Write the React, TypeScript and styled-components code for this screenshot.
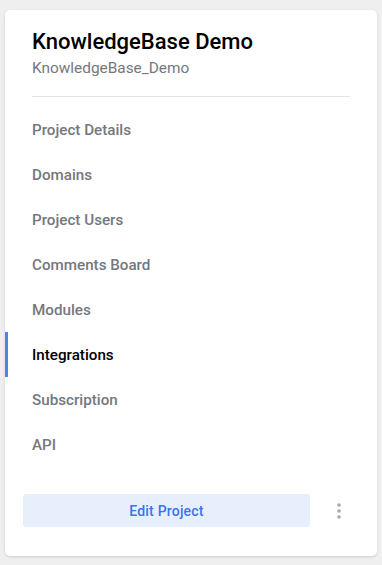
import React from 'react';
import styled, { createGlobalStyle } from 'styled-components';

const GlobalStyle = createGlobalStyle`
  html, body {
    margin: 0;
    padding: 0;
    background-color: #efefef;
    font-family: Roboto, "Liberation Sans", sans-serif;
  }
`;

const Page = styled.div`
  padding: 10px 5px;
`;

const Card = styled.div`
  display: flex;
  flex-direction: column;
  width: 372px;
  height: 546px;
  box-sizing: border-box;
  background-color: white;
  border-radius: 5px;
  box-shadow: 0 1px 3px rgba(0, 0, 0, 0.14);
`;

const Header = styled.div`
  padding: 19px 27px 0;
`;

const Title = styled.h2`
  margin: 0;
  font-size: 22px;
  line-height: 26px;
  font-weight: 500;
  color: #000;
`;

const Subtitle = styled.div`
  margin-top: 3px;
  font-size: 15.4px;
  line-height: 20px;
  color: #74787e;
`;

const Divider = styled.hr`
  margin: 18px 0 0;
  border: none;
  border-top: 1px solid #e4e4e4;
`;

const Nav = styled.nav`
  display: flex;
  flex-direction: column;
  margin-top: 10px;
`;

const NavItem = styled.div<{ $active?: boolean }>`
  display: flex;
  align-items: center;
  height: 45px;
  box-sizing: border-box;
  padding-left: 24px;
  font-size: 15.2px;
  font-weight: 500;
  color: ${(p) => (p.$active ? '#000' : '#74787e')};
  border-left: 3px solid ${(p) => (p.$active ? '#4a86e8' : 'transparent')};
  cursor: pointer;
`;

const Footer = styled.div`
  display: flex;
  align-items: center;
  margin-top: auto;
  padding: 0 0 29px 18px;
`;

const EditButton = styled.button`
  width: 287px;
  height: 33px;
  border: none;
  border-radius: 3px;
  background-color: #e8effc;
  color: #3b72ee;
  font-family: Roboto, "Liberation Sans", sans-serif;
  font-size: 14px;
  font-weight: 500;
  letter-spacing: 0.2px;
  cursor: pointer;
`;

const MoreButton = styled.button`
  display: flex;
  align-items: center;
  justify-content: center;
  width: 58px;
  height: 33px;
  padding: 0;
  border: none;
  background: none;
  cursor: pointer;
`;

const items = [
  'Project Details',
  'Domains',
  'Project Users',
  'Comments Board',
  'Modules',
  'Integrations',
  'Subscription',
  'API',
];

const App: React.FC = () => {
  return (
    <Page>
      <GlobalStyle />
      <Card>
        <Header>
          <Title>KnowledgeBase Demo</Title>
          <Subtitle>KnowledgeBase_Demo</Subtitle>
          <Divider />
        </Header>
        <Nav>
          {items.map((item) => (
            <NavItem key={item} $active={item === 'Integrations'}>
              {item}
            </NavItem>
          ))}
        </Nav>
        <Footer>
          <EditButton>Edit Project</EditButton>
          <MoreButton aria-label="More">
            <svg width="4" height="16" viewBox="0 0 4 16">
              <circle cx="2" cy="2" r="1.8" fill="#a8a8a8" />
              <circle cx="2" cy="8" r="1.8" fill="#a8a8a8" />
              <circle cx="2" cy="14" r="1.8" fill="#a8a8a8" />
            </svg>
          </MoreButton>
        </Footer>
      </Card>
    </Page>
  );
};

export default App;
